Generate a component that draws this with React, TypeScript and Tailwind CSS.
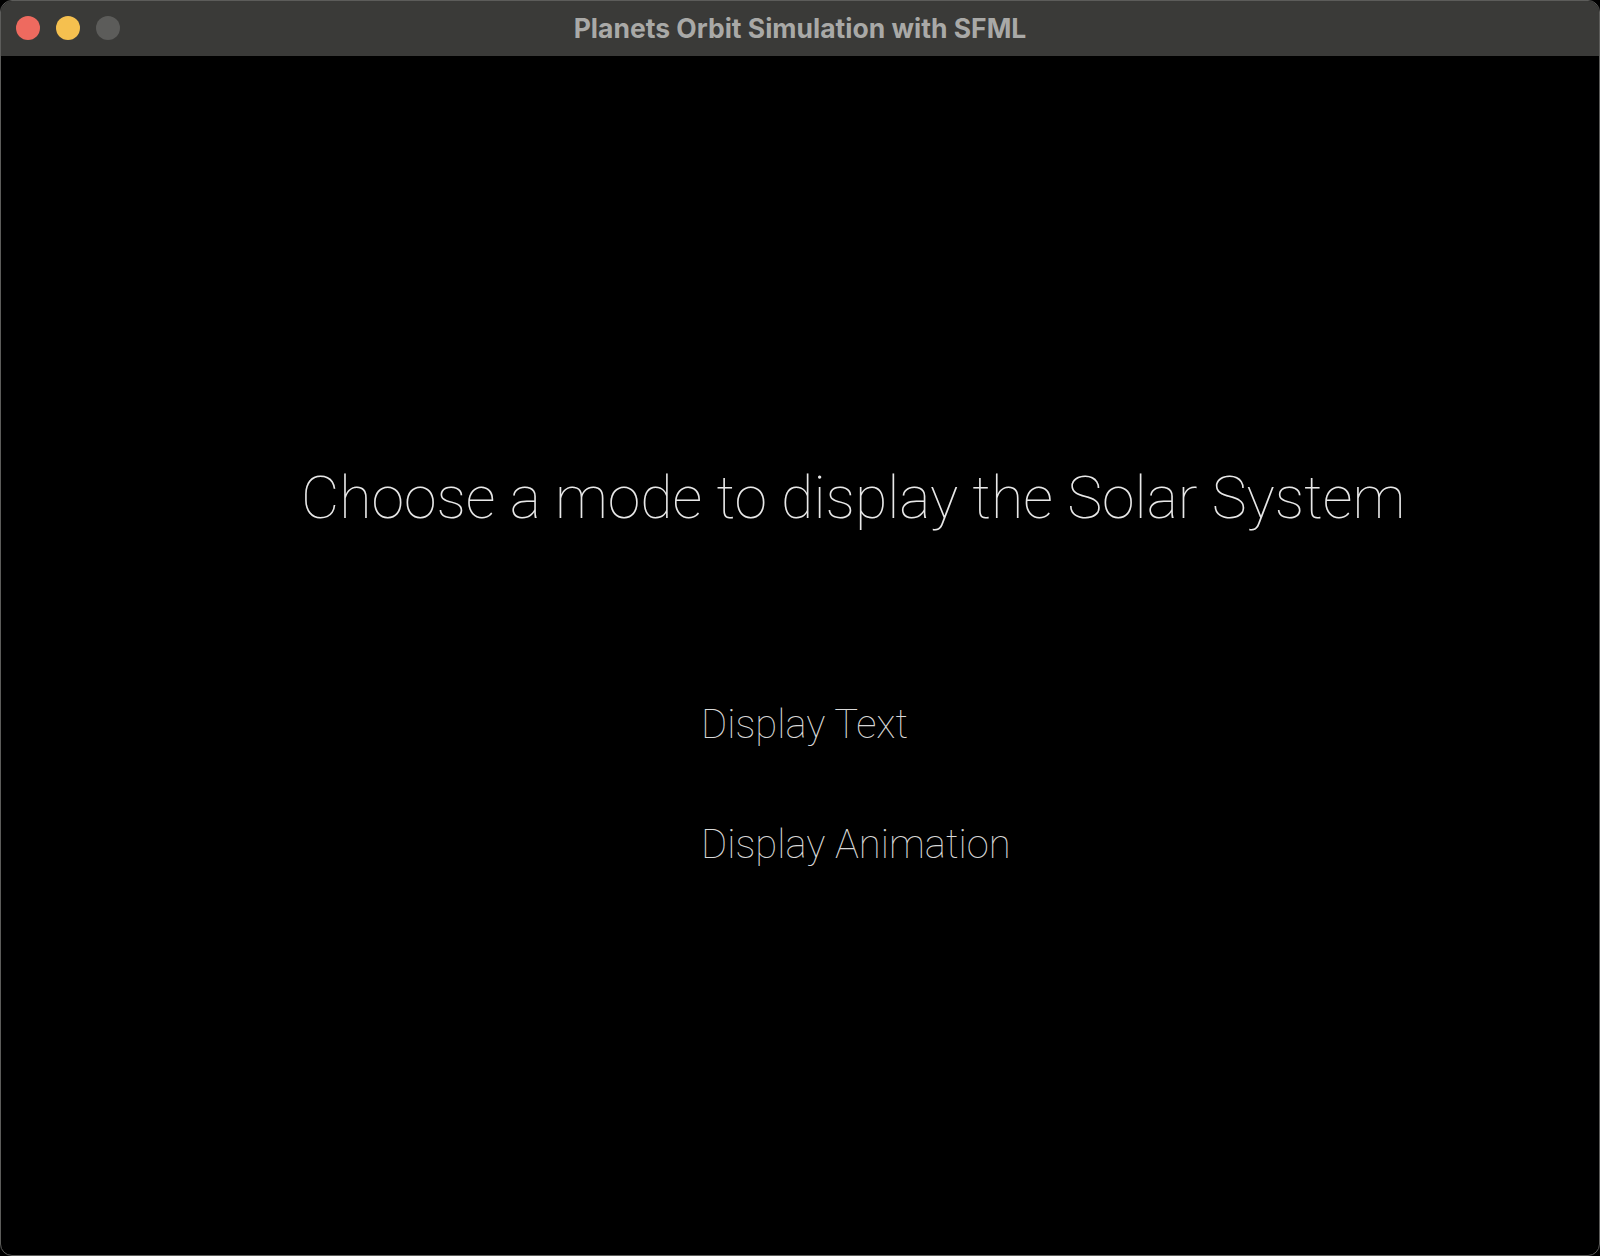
export default function App() {
  return (
    <div className="w-[1600px] h-[1256px] bg-black">
      <div className="w-full h-full flex flex-col rounded-[12px] overflow-hidden border border-[#5c5c5a] bg-black">
        <div className="h-[55px] shrink-0 bg-[#3a3a38] relative flex items-center justify-center">
          <div className="absolute left-[15px] top-[15px] flex gap-[16px]">
            <div className="w-[24px] h-[24px] rounded-full bg-[#ee6a5f]" />
            <div className="w-[24px] h-[24px] rounded-full bg-[#f5c04f]" />
            <div className="w-[24px] h-[24px] rounded-full bg-[#5c5c5a]" />
          </div>
          <div className="text-[26.5px] font-bold text-[#a9a9a7] leading-none" style={{ fontFamily: 'Inter, "Noto Sans", sans-serif' }}>
            Planets Orbit Simulation with SFML
          </div>
        </div>
        <div className="flex-1 flex flex-col pt-[412px]" style={{ fontFamily: 'Roboto, "Noto Sans", sans-serif' }}>
          <div className="pl-[300px] text-[59px] font-thin text-[#e8e8e8] leading-none whitespace-nowrap">
            Choose a mode to display the Solar System
          </div>
          <div className="pl-[700px] mt-[178px] flex flex-col gap-[80px] text-[40px] font-thin text-[#d8d8d8] leading-none">
            <div>Display Text</div>
            <div>Display Animation</div>
          </div>
        </div>
      </div>
    </div>
  );
}
